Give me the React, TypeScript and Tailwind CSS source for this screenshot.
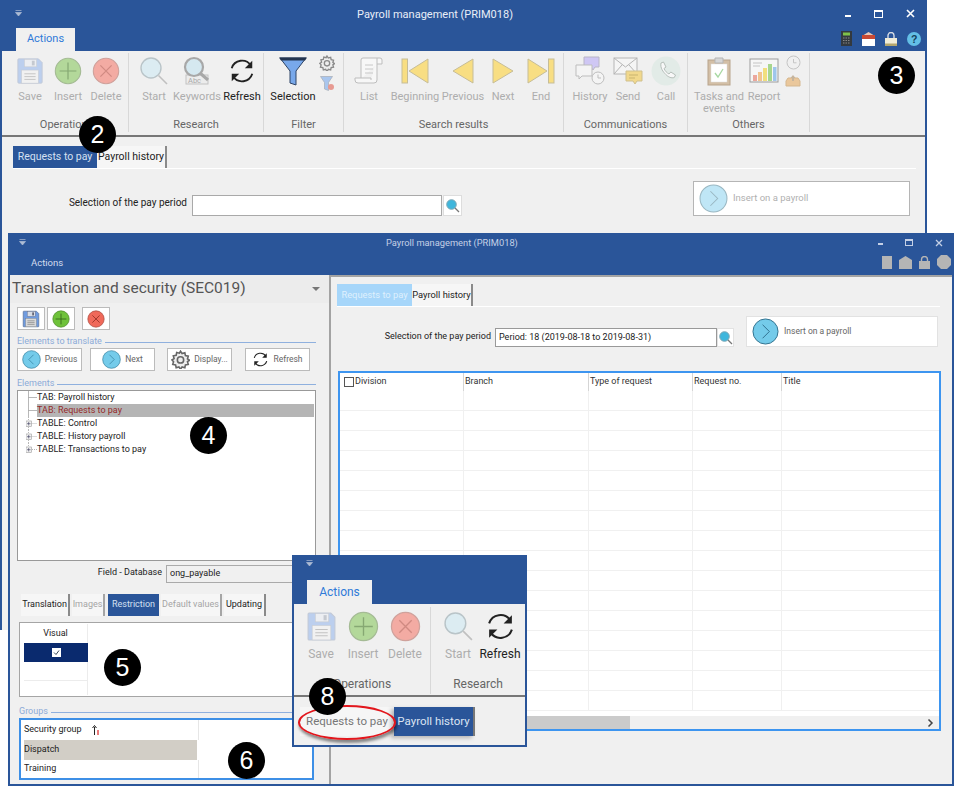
import type { ReactNode } from 'react';

const Grip = () => (
  <svg width="7" height="7" viewBox="0 0 7 7" className="shrink-0">
    <path d="M0.5 0.5h6M0.5 2.5h6L3.5 6z" fill="#aebcd4" stroke="#aebcd4" strokeWidth="0.7" />
  </svg>
);

const Bubble = ({ n, className }: { n: number; className: string }) => (
  <div className={"absolute w-[37px] h-[37px] rounded-full bg-black text-white flex items-center justify-center text-[25px] font-['Liberation_Sans',sans-serif] " + className}>
    {n}
  </div>
);

/* ---- icons ---- */
const Floppy = ({ s = 30, strong = false }: { s?: number; strong?: boolean }) => (
  <svg width={s} height={s} viewBox="0 0 30 30">
    <path d="M2 3a1 1 0 0 1 1-1h21l4 4v21a1 1 0 0 1-1 1H3a1 1 0 0 1-1-1z" fill={strong ? '#6f9be0' : '#bccfee'} stroke={strong ? '#51658a' : '#c2c9d6'} />
    <rect x="9" y="2.5" width="13" height="8" fill={strong ? '#d8dde6' : '#eceef2'} stroke={strong ? '#667' : '#c9ccd2'} strokeWidth="0.6" />
    <rect x="17" y="4" width="3" height="5" fill={strong ? '#667' : '#c5c9d0'} />
    <rect x="6" y="14" width="18" height="14" fill={strong ? '#d9d9d9' : '#f1f1f1'} stroke={strong ? '#777' : '#c9ccd2'} strokeWidth="0.6" />
    <path d="M9 18h12M9 21h12M9 24h12" stroke={strong ? '#777' : '#c2c2c2'} />
  </svg>
);

const Disc = ({ kind, s = 30, strong = false }: { kind: 'plus' | 'x'; s?: number; strong?: boolean }) => {
  const fill = kind === 'plus' ? (strong ? '#6fc23a' : '#b3d89a') : strong ? '#f0695a' : '#f3aba3';
  const edge = kind === 'plus' ? (strong ? '#4e8a2a' : '#a5bb95') : strong ? '#a84b40' : '#cfa29c';
  const mark = kind === 'plus' ? (strong ? '#2f5f17' : '#86a873') : strong ? '#8c2a20' : '#d08a82';
  return (
    <svg width={s} height={s} viewBox="0 0 30 30">
      <circle cx="15" cy="15" r="13.6" fill={fill} stroke={edge} strokeWidth="1.2" />
      {kind === 'plus' ? (
        <path d="M15 6v18M6 15h18" stroke={mark} strokeWidth="1.3" />
      ) : (
        <path d="M9 9l12 12M21 9L9 21" stroke={mark} strokeWidth="1.3" />
      )}
    </svg>
  );
};

const Magnifier = ({ s = 30 }: { s?: number }) => (
  <svg width={s} height={s} viewBox="0 0 30 30">
    <circle cx="12" cy="12" r="10" fill="#dcecf2" stroke="#b9c4c8" strokeWidth="1.4" />
    <path d="M19.5 19.5L28 28" stroke="#c0c0c0" strokeWidth="1.6" />
  </svg>
);

const Keywords = () => (
  <svg width="30" height="30" viewBox="0 0 30 30">
    <rect x="4" y="19" width="22" height="9" fill="#ececec" stroke="#c2c2c2" />
    <text x="6" y="27" fontSize="7.5" fill="#a9a9a9">Abc</text>
    <circle cx="12" cy="11" r="9" fill="#d5e8f0" stroke="#a8a8a8" strokeWidth="2.2" />
    <path d="M18 17l8 7" stroke="#a8a8a8" strokeWidth="3" />
  </svg>
);

const RefreshArrows = ({ s = 28 }: { s?: number }) => (
  <svg width={s} height={s} viewBox="0 0 30 30" fill="none" stroke="#222" strokeWidth="2">
    <path d="M4 12A11.5 11.5 0 0 1 24.5 9" />
    <path d="M26 4l0 8-8 0z" fill="#222" stroke="none" />
    <path d="M26 18A11.5 11.5 0 0 1 5.5 21" />
    <path d="M4 26l0-8 8 0z" fill="#222" stroke="none" />
  </svg>
);

const Funnel = () => (
  <svg width="30" height="30" viewBox="0 0 30 30">
    <path d="M2 2h26L18 15v14l-6-2V15z" fill="#78a8ea" stroke="#2e4466" strokeWidth="1" />
    <path d="M1 1.5h28l-2 3H3z" fill="#24354f" />
  </svg>
);

const SmallGear = ({ s = 16, c = '#8a8a8a' }: { s?: number; c?: string }) => (
  <svg width={s} height={s} viewBox="0 0 24 24" fill="#eee" stroke={c} strokeWidth="2">
    <path d="M12 1.5l2 3 3.5-1 .7 3.6 3.6.7-1 3.5 2.7 1.7-2.7 1.7 1 3.5-3.6.7-.7 3.6-3.5-1-2 2.9-2-2.9-3.5 1-.7-3.6-3.6-.7 1-3.5L1.2 12.500l2.700-1.700-1-3.500 3.600-.7.7-3.600 3.500 1z" />
    <circle cx="12" cy="12.500" r="4" />
  </svg>
);

const SmallFunnel = () => (
  <svg width="15" height="15" viewBox="0 0 15 15">
    <path d="M0.500 0.500h12l-4 6v8l-4-1.500v-6.500z" fill="#a9c6ee" stroke="#a6acb4" strokeWidth="0.7" />
    <circle cx="11" cy="11" r="3" fill="#e79a92" />
  </svg>
);

const Scroll = () => (
  <svg width="30" height="30" viewBox="0 0 30 30" fill="none" stroke="#bdbdbd">
    <path d="M7 23V4a2 2 0 0 1 2-2h17a2 2 0 0 1 2 2v4h-5" fill="#f7f7f7" />
    <path d="M23 2v22a3 3 0 0 1-3 3H4a3 3 0 0 1-3-3v-2h16v2" fill="#f7f7f7" />
    <path d="M11 9h8M11 13h8M11 17h8" stroke="#c8c8c8" />
  </svg>
);

const Nav = ({ kind }: { kind: 'first' | 'prev' | 'next' | 'last' }) => {
  const f = '#f8de83';
  const e = '#c6bd98';
  return (
    <svg width="28" height="26" viewBox="0 0 28 26" stroke={e} strokeWidth="1">
      {kind === 'first' && (
        <>
          <rect x="1" y="1" width="5.500" height="24" fill={f} />
          <path d="M27 1v24L8 13z" fill={f} />
        </>
      )}
      {kind === 'prev' && <path d="M24 1v24L4 13z" fill={f} />}
      {kind === 'next' && <path d="M4 1v24l20-12z" fill={f} />}
      {kind === 'last' && (
        <>
          <path d="M1 1v24l19-12z" fill={f} />
          <rect x="21.500" y="1" width="5.500" height="24" fill={f} />
        </>
      )}
    </svg>
  );
};

const History = () => (
  <svg width="30" height="30" viewBox="0 0 30 30">
    <path d="M9 1h15v10h-4l-2 3-2-3H9z" fill="#cfc7f4" stroke="#b9b6c6" />
    <path d="M1 9h16v11H7l-3 3v-3H1z" fill="#f4f4f4" stroke="#bdbdbd" />
    <circle cx="23" cy="22" r="6" fill="#f4f4f4" stroke="#bdbdbd" />
    <path d="M23 18.500V22h3" fill="none" stroke="#bdbdbd" />
  </svg>
);

const Send = () => (
  <svg width="30" height="30" viewBox="0 0 30 30">
    <rect x="1" y="2" width="23" height="16" fill="#f5f5f5" stroke="#b5b5b5" />
    <path d="M1 2l11.500 9L24 2M1 18l8-9M24 18l-8-9" fill="none" stroke="#b5b5b5" />
    <path d="M13 15h16v10h-5l-2 3-2-3h-7z" fill="#f1d88c" stroke="#cfc08f" />
    <path d="M16 19h9M16 22h6" stroke="#c9b46f" />
  </svg>
);

const Call = () => (
  <svg width="30" height="30" viewBox="0 0 30 30">
    <circle cx="15" cy="15" r="14.500" fill="#e2ebe7" />
    <path d="M10 7l2.500-1 2.500 5-2 1.500c1 2.500 3 4.500 5 5.500l1.800-2 4.700 3-1.200 2.500c-3 1-6-.5-8.500-3S9 12 10 7z" fill="#f8f8f8" stroke="#b6bfba" />
  </svg>
);

const Clipboard = () => (
  <svg width="30" height="30" viewBox="0 0 30 30">
    <rect x="4" y="4" width="22" height="25" fill="#d3bfa6" stroke="#b8a48c" />
    <rect x="7" y="8" width="16" height="18" fill="#fff" stroke="#ddd" strokeWidth="0.5" />
    <path d="M11 2h8v5h-8z" fill="#d6d6d6" stroke="#b5b5b5" />
    <path d="M11 17l3 4 5-8" fill="none" stroke="#a7d8a2" strokeWidth="1.300" />
  </svg>
);

const Report = () => (
  <svg width="30" height="30" viewBox="0 0 30 30">
    <rect x="1" y="3" width="28" height="23" fill="#f6f6f6" stroke="#9b9b9b" />
    <path d="M4 7h9M4 10h7" stroke="#c4c4c4" />
    <rect x="4" y="19" width="4" height="6" fill="#eba79d" />
    <rect x="9" y="16" width="4" height="9" fill="#f0c48f" />
    <rect x="14" y="12" width="4" height="13" fill="#f1df7d" />
    <rect x="19" y="8" width="4" height="17" fill="#a7d68e" />
    <rect x="24" y="11" width="3.500" height="14" fill="#9ec6ec" />
  </svg>
);

const Clock = () => (
  <svg width="15" height="15" viewBox="0 0 15 15" fill="none" stroke="#c5c5c5">
    <circle cx="7.500" cy="7.500" r="6.500" />
    <path d="M7.500 4v3.800h3" />
  </svg>
);

const Inbox = () => (
  <svg width="16" height="12" viewBox="0 0 16 12">
    <path d="M1 6l2-3h10l2 3v5H1z" fill="#eac79b" stroke="#d5b78f" />
    <path d="M8 0L5.500 3h5z" fill="#c5b49d" />
    <rect x="7" y="2" width="2" height="4" fill="#c5b49d" />
  </svg>
);

const Lens = () => (
  <svg width="14" height="14" viewBox="0 0 14 14">
    <circle cx="5.500" cy="5.500" r="4.800" fill="#3fb6dc" stroke="#7fa7b4" />
    <path d="M9 9l4 4" stroke="#777" strokeWidth="1.300" />
  </svg>
);

const Chevron = ({ dir = 'right', s = 28, fill = '#74cbea', edge = '#2f7d9c' }: { dir?: 'left' | 'right'; s?: number; fill?: string; edge?: string }) => (
  <svg width={s} height={s} viewBox="0 0 28 28" className="shrink-0">
    <circle cx="14" cy="14" r="13" fill={fill} stroke={edge} strokeWidth="1" />
    <path d={dir === 'right' ? 'M11 7l7 7-7 7' : 'M17 7l-7 7 7 7'} fill="none" stroke={edge} strokeWidth="1" />
  </svg>
);

/* ---- ribbon ---- */
const RibbonBtn = ({ icon, label, w, off = true, two }: { icon: ReactNode; label: string; w: string; off?: boolean; two?: string }) => (
  <div className={'flex flex-col items-center shrink-0 ' + w}>
    <div className="h-[32px] flex items-center justify-center">{icon}</div>
    <div className={'mt-[4px] text-[11px] leading-[12px] text-center whitespace-nowrap ' + (off ? 'text-[#adadad]' : 'text-[#222]')}>
      {label}
      {two && <div>{two}</div>}
    </div>
  </div>
);

const RibbonGroup = ({ title, width, pad, children }: { title: string; width: string; pad: string; children: ReactNode }) => (
  <div className={'h-[79px] mt-[2px] flex flex-col border-r border-[#d8d8d8] shrink-0 ' + width}>
    <div className={'flex flex-1 pt-[2px] ' + pad}>{children}</div>
    <div className="text-center text-[11px] leading-[14px] text-[#666]">{title}</div>
  </div>
);

const BlueTab = ({ children, className }: { children: ReactNode; className: string }) => (
  <div className={'flex items-center justify-center whitespace-nowrap ' + className}>{children}</div>
);

const SubTab = ({ label, w, state, size }: { label: string; w: string; state: 'on' | 'plain' | 'off' | 'pale'; size: string }) => {
  const look = {
    on: 'bg-[#2a5599] text-[#d5e0f2]',
    plain: 'bg-[#f6f6f6] text-[#222] border-r-2 border-[#8a8a8a]',
    off: 'bg-[#f6f6f6] text-[#a5a5a5] border-r-2 border-[#a5a5a5]',
    pale: 'bg-[#a6d6fa] text-[#dff0fd]',
  }[state];
  return <BlueTab className={'h-full shrink-0 ' + size + ' ' + w + ' ' + look}>{label}</BlueTab>;
};

const InsertBtn = ({ w, h, dim }: { w: string; h: string; dim?: boolean }) => (
  <div className={'bg-white flex items-center gap-[2px] pl-[5px] shrink-0 border ' + w + ' ' + h + (dim ? ' text-[9.500px] border-[#b5b5b5] text-[#b0b0b0]' : ' text-[8.500px] border-[#e2e2e2] text-[#666]')}>
    <Chevron s={dim ? 29 : 27} fill={dim ? '#bfe6f6' : '#74cbea'} edge={dim ? '#9ab7c2' : '#2f6f8c'} />
    <span className="ml-[3px]">Insert on a payroll</span>
  </div>
);

const SmallBtn = ({ w, children }: { w: string; children: ReactNode }) => (
  <div className={'h-[23px] bg-white border border-[#bbb] flex items-center justify-center gap-[4px] text-[8.500px] text-[#666] shrink-0 ' + w}>{children}</div>
);

const SectionLabel = ({ text, className }: { text: string; className: string }) => (
  <div className={'h-[14px] pt-[2px] flex items-center gap-[3px] text-[9px] text-[#8cabd8] ' + className}>
    <span className="whitespace-nowrap">{text}</span>
    <span className="flex-1 h-px bg-[#8fb0de]" />
  </div>
);

const TreeRow = ({ text, plus, last, selected }: { text: string; plus?: boolean; last?: boolean; selected?: boolean }) => (
  <div className="flex h-[13px] items-center pl-[8px]">
    <svg width="11" height="13" viewBox="0 0 11 13" className="shrink-0">
      <path d={last ? 'M2.500 0v6.500H11' : 'M2.500 0v13M2.500 6.500H11'} stroke="#999" strokeWidth="0.700" fill="none" strokeDasharray={plus ? '1 1' : undefined} />
      {plus && (
        <>
          <rect x="0" y="4" width="5.500" height="5.500" fill="#f3f3f3" stroke="#999" strokeWidth="0.600" />
          <path d="M1 6.700h3.500M2.700 5v3.500" stroke="#335" strokeWidth="0.600" />
        </>
      )}
    </svg>
    <span className={'flex-1 h-full leading-[12px] text-[9px] whitespace-nowrap ' + (selected ? 'bg-[#b5b5b5] text-[#962a2a] mr-[1px]' : 'text-[#222]')}>{text}</span>
  </div>
);

const HEADERS = ['Division', 'Branch', 'Type of request', 'Request no.', 'Title'];

export default function App() {
  return (
    <div className="relative w-[954px] h-[787px] overflow-hidden bg-white font-['Roboto',sans-serif]">
      {/* back window */}
      <div className="absolute left-0 top-0 w-[927px] h-[630px] border-x-2 border-t border-[#2a5599] bg-[#f0f0f0] flex flex-col">
        <div className="bg-[#2a5599] h-[50px] shrink-0 flex flex-col">
          <div className="flex items-center h-[25px] pl-[13px] pr-[10px]">
            <Grip />
            <span className="ml-[335px] mt-[3px] text-[11px] text-[#e8eef8]">Payroll management (PRIM018)</span>
            <div className="ml-auto flex items-center gap-[23px] text-white">
              <span className="w-[6px] h-[2px] bg-white mt-[4px]" />
              <span className="w-[9px] h-[8px] border border-white border-t-2" />
              <svg width="9" height="9" viewBox="0 0 9 9"><path d="M1 1l7 7M8 1L1 8" stroke="#fff" strokeWidth="1.600" /></svg>
            </div>
          </div>
          <div className="flex items-end flex-1 pl-[14px] pr-[4px]">
            <BlueTab className="w-[59px] h-[23px] bg-[#f0f0f0] text-[11px] text-[#2f7ad8]">Actions</BlueTab>
            <div className="ml-auto flex items-center gap-[10px] mb-[5px]">
              <svg width="11" height="15" viewBox="0 0 11 15"><rect width="11" height="15" fill="#33393f" /><rect x="2" y="1.500" width="7" height="3" fill="#7ec04a" /><path d="M2 7h7M2 9.500h7M2 12h7" stroke="#888" strokeDasharray="1.500 1" /></svg>
              <svg width="13" height="14" viewBox="0 0 13 14"><path d="M6.500 0L13 4H0z" fill="#e8c7b6" /><rect y="3" width="13" height="4" fill="#c94a33" /><rect y="7" width="13" height="7" fill="#fff" /></svg>
              <svg width="12" height="14" viewBox="0 0 12 14"><path d="M3 7V3.500a3 3 0 0 1 6 0V7" fill="none" stroke="#d5dbe4" strokeWidth="1.400" /><rect y="6" width="12" height="8" fill="#f0ecd8" /><rect y="11.500" width="12" height="2.500" fill="#b3a66e" /></svg>
              <svg width="14" height="14" viewBox="0 0 14 14"><circle cx="7" cy="7" r="7" fill="#63bfe6" /><text x="4" y="11" fontSize="10.500" fontWeight="700" fill="#12415c" fontFamily="Liberation Sans">?</text></svg>
            </div>
          </div>
        </div>
        <div className="h-[86px] shrink-0 flex pl-[3px] border-b-2 border-[#777]">
          <RibbonGroup title="Operations" width="w-[124px]" pad="pl-[6px]">
            <RibbonBtn w="w-[38px]" label="Save" icon={<Floppy s={28} />} />
            <RibbonBtn w="w-[38px]" label="Insert" icon={<Disc kind="plus" s={28} />} />
            <RibbonBtn w="w-[38px]" label="Delete" icon={<Disc kind="x" s={28} />} />
          </RibbonGroup>
          <RibbonGroup title="Research" width="w-[135px]" pad="pl-[6px]">
            <RibbonBtn w="w-[38px]" label="Start" icon={<Magnifier />} />
            <RibbonBtn w="w-[48px]" label="Keywords" icon={<Keywords />} />
            <RibbonBtn w="w-[42px]" label="Refresh" off={false} icon={<RefreshArrows />} />
          </RibbonGroup>
          <RibbonGroup title="Filter" width="w-[80px]" pad="pl-[6px]">
            <RibbonBtn w="w-[46px]" label="Selection" off={false} icon={<Funnel />} />
            <div className="flex flex-col items-center gap-[5px] ml-[3px]">
              <SmallGear />
              <SmallFunnel />
            </div>
          </RibbonGroup>
          <RibbonGroup title="Search results" width="w-[220px]" pad="pl-[6px]">
            <RibbonBtn w="w-[38px]" label="List" icon={<Scroll />} />
            <RibbonBtn w="w-[54px]" label="Beginning" icon={<Nav kind="first" />} />
            <RibbonBtn w="w-[42px]" label="Previous" icon={<Nav kind="prev" />} />
            <RibbonBtn w="w-[38px]" label="Next" icon={<Nav kind="next" />} />
            <RibbonBtn w="w-[38px]" label="End" icon={<Nav kind="last" />} />
          </RibbonGroup>
          <RibbonGroup title="Communications" width="w-[124px]" pad="pl-[7px]">
            <RibbonBtn w="w-[38px]" label="History" icon={<History />} />
            <RibbonBtn w="w-[38px]" label="Send" icon={<Send />} />
            <RibbonBtn w="w-[38px]" label="Call" icon={<Call />} />
          </RibbonGroup>
          <RibbonGroup title="Others" width="w-[122px]" pad="pl-[6px]">
            <RibbonBtn w="w-[50px]" label="Tasks and" two="events" icon={<Clipboard />} />
            <RibbonBtn w="w-[40px]" label="Report" icon={<Report />} />
            <div className="flex flex-col items-center gap-[5px] ml-[1px]">
              <Clock />
              <Inbox />
            </div>
          </RibbonGroup>
        </div>
        <div className="flex h-[24px] mt-[8px] ml-[11px] mr-[9px] border-b border-white shrink-0 pt-[1px]">
          <SubTab label="Requests to pay" w="w-[84px]" state="on" size="text-[10.500px]" />
          <SubTab label="Payroll history" w="w-[70px]" state="plain" size="text-[10.500px]" />
        </div>
        <div className="flex items-end ml-[11px] mt-[12px]">
          <div className="w-[174px] text-right text-[10px] text-[#222] mb-[6px] whitespace-nowrap">Selection of the pay period</div>
          <div className="ml-[5px] w-[250px] h-[21px] bg-white border border-[#a9a9a9]" />
          <div className="ml-[1px] w-[19px] h-[21px] bg-white border border-[#ddd] flex items-center justify-center"><Lens /></div>
          <div className="ml-[231px]"><InsertBtn w="w-[217px]" h="h-[35px]" dim /></div>
        </div>
      </div>

      {/* front window */}
      <div className="absolute left-[8px] top-[233px] w-[946px] h-[553px] border-2 border-[#2a5599] bg-[#f0f0f0] flex flex-col">
        <div className="h-[40px] bg-[#2a5599] shrink-0 flex flex-col">
          <div className="flex items-center h-[15px] pl-[9px] pr-[9px]">
            <Grip />
            <span className="ml-[360px] text-[9.300px] text-[#c4d0e6]">Payroll management (PRIM018)</span>
            <div className="ml-auto flex items-center gap-[22px]">
              <span className="w-[5px] h-[2px] bg-[#c4d0e6] mt-[3px]" />
              <span className="w-[8px] h-[7px] border border-[#c4d0e6] border-t-2" />
              <svg width="8" height="8" viewBox="0 0 8 8"><path d="M1 1l6 6M7 1L1 7" stroke="#c4d0e6" strokeWidth="1.300" /></svg>
            </div>
          </div>
          <div className="flex items-center flex-1 pl-[21px]">
            <span className="text-[9.500px] text-[#d3dcee] mt-[1px]">Actions</span>
            <div className="ml-auto flex items-center gap-[7px] pr-[1px] mb-[1px]">
              <span className="w-[10px] h-[13px] bg-[#b5b5b5]" />
              <svg width="13" height="13" viewBox="0 0 13 13"><path d="M6.500 0L13 4v9H0V4z" fill="#b5b5b5" /></svg>
              <svg width="11" height="13" viewBox="0 0 11 13"><path d="M2.500 6V3.500a3 3 0 0 1 6 0V6" fill="none" stroke="#b5b5b5" strokeWidth="1.400" /><rect y="5" width="11" height="8" fill="#b5b5b5" /></svg>
              <svg width="14" height="14" viewBox="0 0 14 14"><path d="M4 0h6l4 4v6l-4 4H4l-4-4V4z" fill="#b5b5b5" /></svg>
            </div>
          </div>
        </div>
        <div className="flex flex-1 min-h-0">
          {/* translation panel */}
          <div className="w-[319px] shrink-0 flex flex-col">
            <div className="h-[28px] flex items-center pl-[2px] pr-[9px] text-[15.500px] text-[#555] bg-[#ececec] shrink-0">
              <span>Translation and security (SEC019)</span>
              <span className="ml-auto w-0 h-0 border-x-[4px] border-x-transparent border-t-[4px] border-t-[#777]" />
            </div>
            <div className="flex mt-[4px] ml-[7px] gap-[2px]">
              <SmallBtn w="w-[28px]"><Floppy s={18} strong /></SmallBtn>
              <SmallBtn w="w-[28px]"><Disc kind="plus" s={18} strong /></SmallBtn>
              <div className="ml-[5px]"><SmallBtn w="w-[28px]"><Disc kind="x" s={18} strong /></SmallBtn></div>
            </div>
            <SectionLabel text="Elements to translate" className="mt-[4px] ml-[7px] w-[299px]" />
            <div className="flex ml-[7px]">
              <SmallBtn w="w-[65px]"><Chevron dir="left" s={19} />Previous</SmallBtn>
              <div className="ml-[8px]"><SmallBtn w="w-[65px]"><Chevron s={19} />Next</SmallBtn></div>
              <div className="ml-[12px]"><SmallBtn w="w-[65px]"><SmallGear s={19} c="#666" />Display...</SmallBtn></div>
              <div className="ml-[13px]"><SmallBtn w="w-[65px]"><RefreshArrows s={17} />Refresh</SmallBtn></div>
            </div>
            <SectionLabel text="Elements" className="mt-[5px] ml-[7px] w-[299px]" />
            <div className="ml-[7px] w-[299px] h-[171px] bg-white border border-[#999] shrink-0">
              <TreeRow text="TAB: Payroll history" />
              <TreeRow text="TAB: Requests to pay" selected />
              <TreeRow text="TABLE: Control" plus />
              <TreeRow text="TABLE: History payroll" plus />
              <TreeRow text="TABLE: Transactions to pay" plus last />
            </div>
            <div className="flex items-center mt-[4px] h-[18px] shrink-0">
              <span className="w-[152px] text-right text-[9px] text-[#222] pb-[3px]">Field - Database</span>
              <div className="ml-[4px] w-[150px] h-full bg-[#f0f0f0] border border-[#aaa] text-[9px] text-[#222] pl-[3px] flex items-center">ong_payable</div>
            </div>
            <div className="flex h-[22px] mt-[11px] ml-[11px] gap-[2px] shrink-0">
              <SubTab label="Translation" w="w-[49px]" state="plain" size="text-[9px]" />
              <SubTab label="Images" w="w-[33px]" state="off" size="text-[9px]" />
              <div className="ml-[1px] h-full"><SubTab label="Restriction" w="w-[51px]" state="on" size="text-[9px]" /></div>
              <SubTab label="Default values" w="w-[61px]" state="off" size="text-[9px]" />
              <SubTab label="Updating" w="w-[42px]" state="plain" size="text-[9px]" />
            </div>
            <div className="ml-[9px] w-[297px] h-[75px] mt-[6px] bg-white border border-[#a5a5a5] pl-[4px] pt-[1px] shrink-0">
              <div className="flex h-[19px] items-center w-[64px] justify-center text-[9px] text-[#222] border-r border-[#ececec]">Visual</div>
              <div className="flex h-[19px] w-[64px] bg-[#0a2a6e] items-center justify-center">
                <span className="w-[9px] h-[9px] bg-white flex items-center justify-center">
                  <svg width="7" height="7" viewBox="0 0 7 7"><path d="M1 3.500l2 2 3-4" fill="none" stroke="#234" strokeWidth="0.900" /></svg>
                </span>
              </div>
              <div className="h-[19px] w-[64px] border-b border-r border-[#ececec]" />
              <div className="h-[14px] w-[64px] border-r border-[#ececec]" />
            </div>
            <SectionLabel text="Groups" className="mt-[7px] ml-[9px] w-[295px]" />
            <div className="ml-[9px] w-[295px] h-[62px] bg-white border-2 border-[#3d8fe6] pl-[3px] text-[9px] text-[#222] shrink-0">
              <div className="h-[20px] w-[175px] flex items-center border-r border-[#e6e6e6] gap-[10px]">
                Security group
                <svg width="8" height="10" viewBox="0 0 8 10"><path d="M2.500 10V2M0.500 3l2-2.500 2 2.500" fill="none" stroke="#222" /><path d="M6 5v5" stroke="#d22" strokeWidth="1.200" /></svg>
              </div>
              <div className="h-[20px] w-[173px] flex items-center bg-[#d2cec6]">Dispatch</div>
              <div className="h-[18px] w-[175px] flex items-center border-r border-[#e6e6e6]">Training</div>
            </div>
          </div>

          {/* right panel */}
          <div className="flex-1 border-l-2 border-l-[#a3a3a3] border-t-2 border-t-[#a3a3a3] min-w-0 flex flex-col">
            <div className="flex h-[23px] mt-[7px] ml-[6px] mr-[12px] border-b border-white shrink-0">
              <SubTab label="Requests to pay" w="w-[75px]" state="pale" size="text-[9.300px]" />
              <SubTab label="Payroll history" w="w-[61px]" state="plain" size="text-[9.300px]" />
            </div>
            <div className="flex items-end mt-[9px] shrink-0">
              <span className="w-[160px] text-right text-[9px] text-[#222] mb-[4px] whitespace-nowrap">Selection of the pay period</span>
              <div className="ml-[4px] w-[222px] h-[19px] bg-white border border-[#999] text-[9px] text-[#222] pl-[3px] flex items-center">Period: 18 (2019-08-18 to 2019-08-31)</div>
              <div className="w-[17px] h-[19px] bg-white border border-[#e2e2e2] flex items-center justify-center"><Lens /></div>
              <div className="ml-[12px]"><InsertBtn w="w-[192px]" h="h-[31px]" /></div>
            </div>
            <div className="mt-[24px] ml-[7px] w-[603px] h-[360px] bg-white border-2 border-[#3d95f0] flex flex-col shrink-0">
              <div className="flex-1 overflow-hidden min-h-0">
                <div className="grid grid-cols-[124px_125px_104px_89px_1fr] text-[9px] text-[#333] h-[18px]">
                  {HEADERS.map((h, i) => (
                    <div key={h} className="flex items-center pl-[1px] border-r border-[#d5d5d5] last:border-r-0 h-[18px]">
                      {i === 0 && <span className="w-[10px] h-[10px] border border-[#555] mr-[1px] ml-[3px]" />}
                      {h}
                    </div>
                  ))}
                </div>
                {Array.from({ length: 16 }).map((_, r) => (
                  <div key={r} className="grid grid-cols-[124px_125px_104px_89px_1fr] h-[20px] border-b border-[#f0f0f0]">
                    {[0, 1, 2, 3, 4].map((c) => (
                      <div key={c} className="border-r border-[#f0f0f0] last:border-r-0" />
                    ))}
                  </div>
                ))}
              </div>
              <div className="h-[13px] bg-[#f0f0f0] flex items-center shrink-0">
                <div className="w-[290px] h-full bg-[#cbcbcb]" />
                <svg width="7" height="8" viewBox="0 0 7 8" className="ml-auto mr-[5px]"><path d="M1.500 0.500L5 4 1.500 7.500" fill="none" stroke="#444" strokeWidth="1.500" /></svg>
              </div>
            </div>
          </div>
        </div>
      </div>

      {/* zoomed snippet */}
      <div className="absolute left-[292px] top-[555px] w-[235px] h-[192px] border-2 border-[#2a5599] bg-[#f0f0f0] flex flex-col">
        <div className="h-[47px] bg-[#2a5599] flex flex-col shrink-0">
          <div className="h-[23px] pl-[12px] pt-[3px]"><Grip /></div>
          <BlueTab className="ml-[13px] w-[65px] flex-1 bg-[#f0f0f0] text-[12px] text-[#2f7ad8]">Actions</BlueTab>
        </div>
        <div className="h-[93px] shrink-0 flex border-b-2 border-[#777]">
          <div className="w-[137px] mt-[3px] h-[87px] border-r border-[#d8d8d8] flex flex-col shrink-0">
            <div className="flex flex-1 pl-[6px] pt-[4px]">
              <div className="w-[42px] flex flex-col items-center text-[12px] text-[#adadad]"><Floppy s={31} /><span className="mt-[3px]">Save</span></div>
              <div className="w-[42px] flex flex-col items-center text-[12px] text-[#adadad]"><Disc kind="plus" s={31} /><span className="mt-[3px]">Insert</span></div>
              <div className="w-[42px] flex flex-col items-center text-[12px] text-[#adadad]"><Disc kind="x" s={31} /><span className="mt-[3px]">Delete</span></div>
            </div>
            <div className="text-center text-[12px] text-[#666] mb-[1px]">Operations</div>
          </div>
          <div className="flex-1 mt-[3px] h-[87px] flex flex-col">
            <div className="flex flex-1 pl-[6px] pt-[4px]">
              <div className="w-[42px] flex flex-col items-center text-[12px] text-[#adadad]"><Magnifier s={31} /><span className="mt-[3px]">Start</span></div>
              <div className="w-[42px] flex flex-col items-center text-[12px] text-[#222]"><RefreshArrows s={31} /><span className="mt-[3px]">Refresh</span></div>
            </div>
            <div className="text-center text-[12px] text-[#666] mb-[1px]">Research</div>
          </div>
        </div>
        <div className="flex h-[29px] mt-[10px] ml-[6px] shrink-0">
          <BlueTab className="w-[94px] h-full text-[11.500px] text-[#777] bg-[#f6f6f6]">Requests to pay</BlueTab>
          <BlueTab className="w-[81px] h-full text-[11.500px] text-[#dbe4f3] bg-[#2a5599] border-r-2 border-[#777] shadow-[-3px_2px_4px_rgba(0,0,0,0.25)]">Payroll history</BlueTab>
        </div>
      </div>

      {/* red callout */}
      <div className="absolute left-[298px] top-[705px] w-[98px] h-[35px] rounded-[50%] border-[2.500px] border-[#e2171d] shadow-[1px_3px_3px_rgba(0,0,0,0.45)]" />

      <Bubble n={2} className="left-[79px] top-[116px]" />
      <Bubble n={3} className="left-[878px] top-[57px]" />
      <Bubble n={4} className="left-[190px] top-[417px]" />
      <Bubble n={5} className="left-[104px] top-[649px]" />
      <Bubble n={6} className="left-[228px] top-[742px]" />
      <Bubble n={8} className="left-[309px] top-[678px]" />
    </div>
  );
}
